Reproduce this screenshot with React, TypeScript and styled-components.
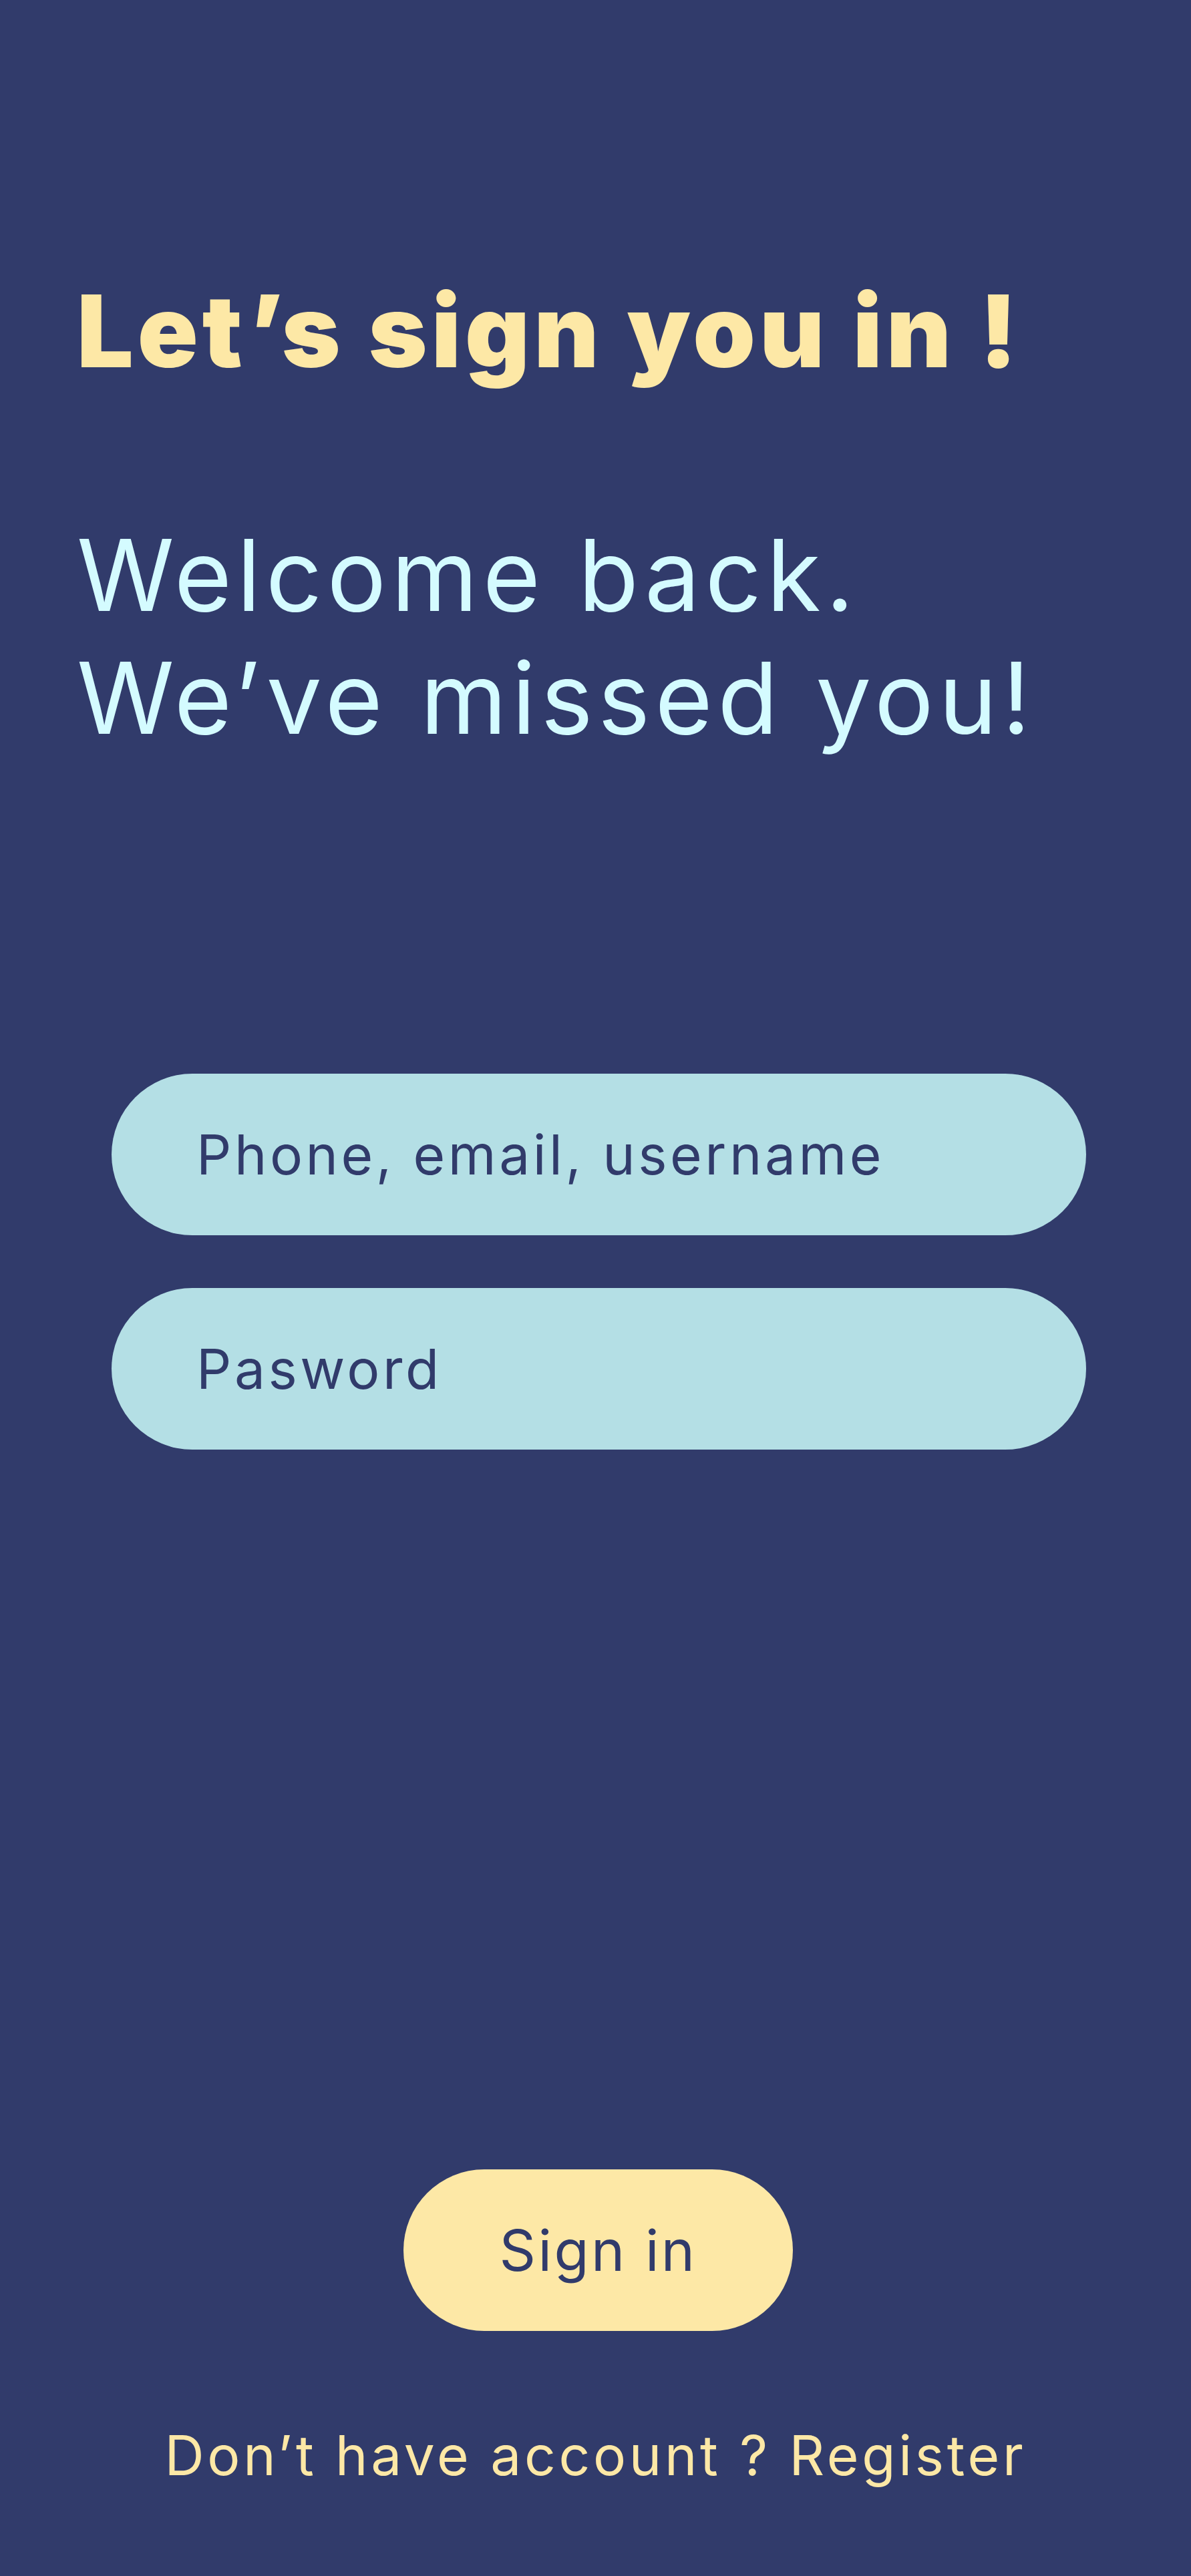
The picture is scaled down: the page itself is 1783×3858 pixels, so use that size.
import React from "react";
import styled, { createGlobalStyle } from "styled-components";

const GlobalStyle = createGlobalStyle`
  html, body {
    margin: 0;
    padding: 0;
    background: #313b6b;
  }
  * { box-sizing: border-box; }
`;

const Page = styled.main`
  min-height: 3858px;
  width: 100%;
  background: #313b6b;
  display: flex;
  flex-direction: column;
  padding: 406px 0 130px;
  font-family: Inter, "Noto Sans", sans-serif;
`;

const Title = styled.h1`
  margin: 0 0 0 115px;
  font-size: 150px;
  line-height: 180px;
  font-weight: 900;
  color: #fde8a6;
  letter-spacing: 0.04em;
`;

const Welcome = styled.p`
  margin: 184px 0 0 115px;
  font-size: 148px;
  line-height: 184px;
  font-weight: 400;
  color: #d4fbff;
  letter-spacing: 0.05em;
`;

const Form = styled.form`
  margin: 470px 157px 0 167px;
  display: flex;
  flex-direction: column;
  gap: 79px;
`;

const Field = styled.input`
  height: 242px;
  width: 100%;
  border: none;
  outline: none;
  border-radius: 121px;
  background: #b4dfe5;
  padding: 0 0 0 127px;
  font-family: Inter, "Noto Sans", sans-serif;
  font-size: 82px;
  font-weight: 400;
  letter-spacing: 0.055em;
  color: #313b6b;
  &::placeholder {
    color: #313b6b;
    opacity: 1;
  }
`;

const Bottom = styled.div`
  margin-top: auto;
  display: flex;
  flex-direction: column;
  align-items: center;
  gap: 137px;
`;

const SignIn = styled.button`
  width: 583px;
  height: 242px;
  margin-left: 8px;
  border: none;
  border-radius: 121px;
  background: #fde8a6;
  color: #313b6b;
  font-family: Inter, "Noto Sans", sans-serif;
  font-size: 85px;
  font-weight: 400;
  letter-spacing: 0.04em;
  cursor: pointer;
`;

const Footer = styled.p`
  margin: 0;
  font-size: 82px;
  line-height: 100px;
  color: #fde8a6;
  letter-spacing: 0.057em;
`;

export default function App() {
  return (
    <>
      <GlobalStyle />
      <Page>
        <Title>Let’s sign you in !</Title>
        <Welcome>
          Welcome back.
          <br />
          We’ve missed you!
        </Welcome>
        <Form onSubmit={(e) => e.preventDefault()}>
          <Field type="text" placeholder="Phone, email, username" />
          <Field type="password" placeholder="Pasword" />
        </Form>
        <Bottom>
          <SignIn type="submit">Sign in</SignIn>
          <Footer>Don’t have account ? Register</Footer>
        </Bottom>
      </Page>
    </>
  );
}
